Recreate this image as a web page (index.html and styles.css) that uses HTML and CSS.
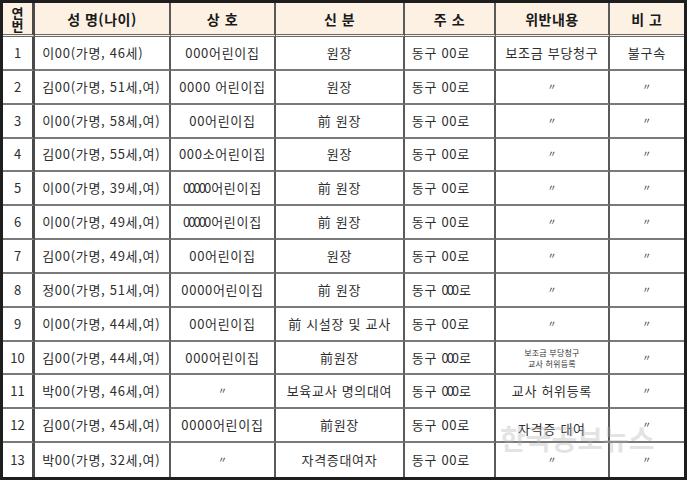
FILE: index.html
```html
<!DOCTYPE html>
<html lang="ko">
<head>
<meta charset="utf-8">
<link rel="stylesheet" href="styles.css">
</head>
<body>
<div class="wrap">
<table class="grid">
  <thead>
    <tr>
      <th class="c1 num-h">연<br>번</th>
      <th class="c2">성 명(나이)</th>
      <th class="c3">상 호</th>
      <th class="c4">신 분</th>
      <th class="c5">주 소</th>
      <th class="c6">위반내용</th>
      <th class="c7">비 고</th>
    </tr>
  </thead>
  <tbody>
    <tr><td class="num">1</td><td class="left">이00(가명, 46세)</td><td>000어린이집</td><td>원장</td><td class="left">동구 00로</td><td>보조금 부당청구</td><td>불구속</td></tr>
    <tr><td class="num">2</td><td class="left">김00(가명, 51세,여)</td><td>0000 어린이집</td><td>원장</td><td class="left">동구 00로</td><td class="dit">〃</td><td class="dit">〃</td></tr>
    <tr><td class="num">3</td><td class="left">이00(가명, 58세,여)</td><td>00어린이집</td><td>前 원장</td><td class="left">동구 00로</td><td class="dit">〃</td><td class="dit">〃</td></tr>
    <tr><td class="num">4</td><td class="left">김00(가명, 55세,여)</td><td>000소어린이집</td><td>원장</td><td class="left">동구 00로</td><td class="dit">〃</td><td class="dit">〃</td></tr>
    <tr><td class="num">5</td><td class="left">이00(가명, 39세,여)</td><td><span class="cond">00000</span>어린이집</td><td>前 원장</td><td class="left">동구 00로</td><td class="dit">〃</td><td class="dit">〃</td></tr>
    <tr><td class="num">6</td><td class="left">이00(가명, 49세,여)</td><td><span class="cond">00000</span>어린이집</td><td>前 원장</td><td class="left">동구 00로</td><td class="dit">〃</td><td class="dit">〃</td></tr>
    <tr><td class="num">7</td><td class="left">김00(가명, 49세,여)</td><td>00어린이집</td><td>원장</td><td class="left">동구 00로</td><td class="dit">〃</td><td class="dit">〃</td></tr>
    <tr><td class="num">8</td><td class="left">정00(가명, 51세,여)</td><td>0000어린이집</td><td>前 원장</td><td class="left">동구 <span class="cond">000</span>로</td><td class="dit">〃</td><td class="dit">〃</td></tr>
    <tr><td class="num">9</td><td class="left">이00(가명, 44세,여)</td><td>00어린이집</td><td>前 시설장 및 교사</td><td class="left">동구 00로</td><td class="dit">〃</td><td class="dit">〃</td></tr>
    <tr><td class="num">10</td><td class="left">김00(가명, 44세,여)</td><td>000어린이집</td><td>前원장</td><td class="left">동구 <span class="cond">000</span>로</td><td class="small">보조금 부당청구<br>교사 허위등록</td><td class="dit">〃</td></tr>
    <tr><td class="num">11</td><td class="left">박00(가명, 46세,여)</td><td class="dit">〃</td><td>보육교사 명의대여</td><td class="left">동구 <span class="cond">000</span>로</td><td>교사 허위등록</td><td class="dit">〃</td></tr>
    <tr><td class="num">12</td><td class="left">김00(가명, 45세,여)</td><td>0000어린이집</td><td>前원장</td><td class="left">동구 00로</td><td class="low">자격증 대여</td><td class="dit">〃</td></tr>
    <tr><td class="num">13</td><td class="left">박00(가명, 32세,여)</td><td class="dit">〃</td><td>자격증대여자</td><td class="left">동구 00로</td><td class="dit">〃</td><td class="dit">〃</td></tr>
  </tbody>
</table>
<div class="watermark">한국공보뉴스</div>
</div>
</body>
</html>
```

FILE: styles.css
```css
html, body {
  margin: 0;
  padding: 0;
  background: #ffffff;
}
.wrap {
  position: relative;
  width: 688px;
  height: 480px;
  overflow: hidden;
}
.grid {
  border-collapse: separate;
  border-spacing: 0;
  table-layout: fixed;
  width: 687px;
  border-style: solid;
  border-color: #1e1e1e;
  border-width: 3px;
  font-family: "Noto Sans CJK KR", "Noto Sans", sans-serif;
  font-size: 13px;
  color: #2e2e2e;
}
.grid th, .grid td {
  box-sizing: border-box;
  padding: 0;
  text-align: center;
  vertical-align: middle;
  border-right: 2px solid #5a5a5a;
  border-bottom: 2px solid #7a7a7a;
  white-space: nowrap;
  line-height: 16px;
}
.grid td {
  height: 33.85px;
  letter-spacing: 0.7px;
}
.grid th:last-child, .grid td:last-child {
  border-right: none;
}
.grid tbody tr:last-child td {
  border-bottom: none;
}
.grid th {
  background: #fcf1e3;
  font-weight: 700;
  font-size: 14px;
  letter-spacing: 0.5px;
  color: #1a1a1a;
  height: 34px;
  border-bottom: 3px double #6a6a6a;
}
.grid th:first-child, .grid td:first-child {
  border-right: 3px solid #4a4a4a;
}
.c1 { width: 32px; }
.c2 { width: 135px; }
.c3 { width: 105px; }
.c4 { width: 128px; }
.c5 { width: 91px; }
.c6 { width: 113px; }
.c7 { width: 74px; }
.grid th.num-h {
  font-size: 13px;
  line-height: 13px;
  letter-spacing: 0;
}
.grid td.num {
  letter-spacing: 0;
}
.grid td.left {
  text-align: left;
  padding-left: 7px;
}
.grid td.dit {
  font-size: 9px;
  letter-spacing: 0;
  color: #333;
}
.grid td.small {
  font-size: 8px;
  line-height: 11px;
  letter-spacing: 0.2px;
  color: #333;
}
.grid td.low {
  padding-top: 8px;
}
.cond {
  letter-spacing: -2px;
  margin-right: 2px;
}
.watermark {
  position: absolute;
  left: 500px;
  top: 418px;
  font-family: "Noto Sans CJK KR", sans-serif;
  font-weight: 700;
  font-size: 28px;
  color: rgba(175, 175, 175, 0.35);
  pointer-events: none;
}
```
